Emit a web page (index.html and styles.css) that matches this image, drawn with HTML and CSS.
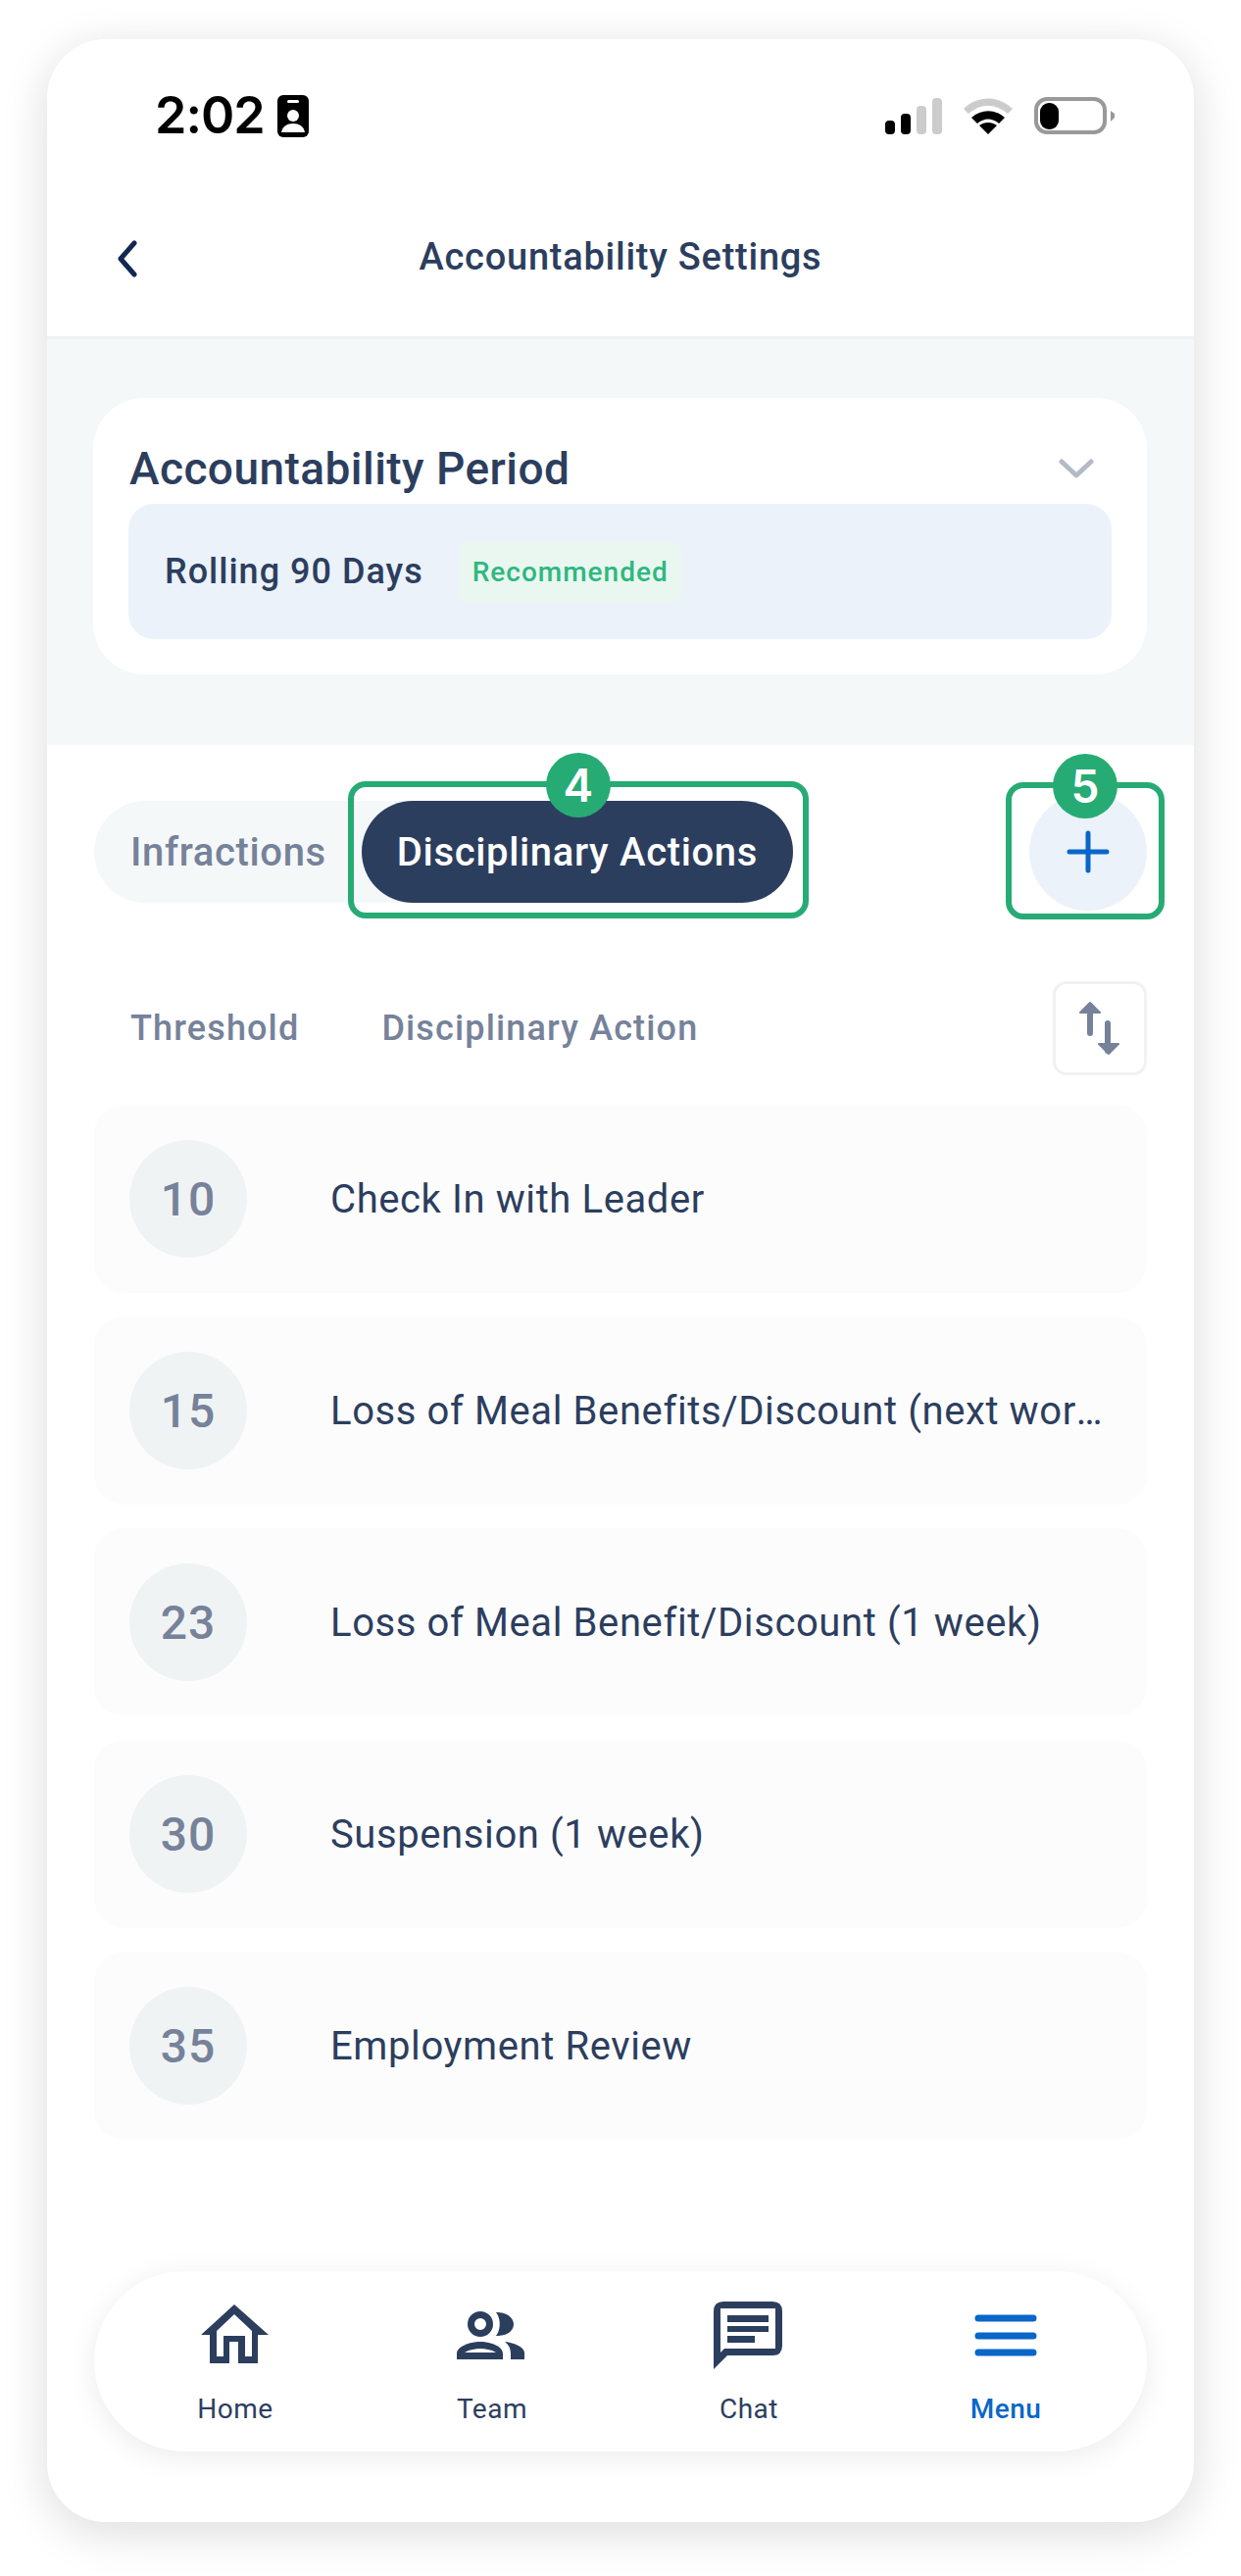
FILE: index.html
```html
<!DOCTYPE html>
<html lang="en">
<head>
    <meta charset="UTF-8">
    <meta name="viewport" content="width=device-width, initial-scale=1.0">
    <title>Accountability Settings</title>
    <link rel="stylesheet" href="styles.css">
</head>
<body>
    <div class="phone">
        <div class="status-bar">
            <div class="status-left">
                <span class="time">2:02</span>
                <svg class="id-icon" width="32" height="43" viewBox="0 0 32 43">
                    <rect width="32" height="43" rx="6" fill="#000"/>
                    <rect x="10" y="5" width="12" height="3" rx="1.5" fill="#fff"/>
                    <circle cx="16" cy="21" r="6" fill="#fff"/>
                    <path d="M4 38 C5 32 10 29 16 29 C22 29 27 32 28 38 Z" fill="#fff"/>
                </svg>
            </div>
            <div class="status-right">
                <svg width="58" height="37" viewBox="0 0 58 37">
                    <rect x="0" y="23" width="10" height="14" rx="4" fill="#000"/>
                    <rect x="16" y="16" width="10" height="21" rx="4" fill="#000"/>
                    <rect x="32" y="8" width="10" height="29" rx="4" fill="#ccc"/>
                    <rect x="48" y="0" width="10" height="37" rx="4" fill="#ccc"/>
                </svg>
                <svg width="50" height="37" viewBox="0 0 50 37">
                    <path d="M0 11 C14 -3 36 -3 50 11 L45 16 C32 5 18 5 5 16 Z" fill="#ccc"/>
                    <path d="M8 20 C18 11 32 11 42 20 L36 26 C29 20 21 20 14 26 Z" fill="#000"/>
                    <path d="M16 28 C21 24 29 24 34 28 L25 37 Z" fill="#000"/>
                </svg>
                <svg width="82" height="38" viewBox="0 0 82 38">
                    <rect x="2" y="2" width="70" height="34" rx="11" fill="none" stroke="#999" stroke-width="4"/>
                    <rect x="6" y="6" width="19" height="27" rx="9" fill="#000"/>
                    <path d="M78 14 L82 17 V21 L78 25 Z" fill="#999"/>
                </svg>
            </div>
        </div>

        <div class="top-nav">
            <svg class="back" width="24" height="38" viewBox="0 0 24 38">
                <path d="M19 3 L5 19 L19 35" fill="none" stroke="#14284f" stroke-width="5" stroke-linecap="round" stroke-linejoin="round"/>
            </svg>
            <span class="top-title">Accountability Settings</span>
        </div>

        <div class="period-band">
            <div class="period-card">
                <div class="period-head">
                    <span class="period-title">Accountability Period</span>
                    <svg width="36" height="20" viewBox="0 0 36 20">
                        <path d="M3 3 L18 17 L33 3" fill="none" stroke="#b4bbc7" stroke-width="5" stroke-linecap="round" stroke-linejoin="round"/>
                    </svg>
                </div>
                <div class="period-value">
                    <span class="period-name">Rolling 90 Days</span>
                    <span class="tag-green">Recommended</span>
                </div>
            </div>
        </div>

        <div class="tabs-row">
            <div class="tabs">
                <span class="tab">Infractions</span>
                <span class="tab tab-active">
                    Disciplinary Actions
                    <span class="mark mark-tab"><span class="mark-badge">4</span></span>
                </span>
            </div>
            <button class="add-button">
                <svg width="44" height="44" viewBox="0 0 44 44">
                    <path d="M22 3 V41 M3 22 H41" fill="none" stroke="#0a66c8" stroke-width="5" stroke-linecap="round"/>
                </svg>
                <span class="mark mark-add"><span class="mark-badge">5</span></span>
            </button>
        </div>

        <div class="table-head">
            <span class="col-threshold">Threshold</span>
            <span class="col-action">Disciplinary Action</span>
            <button class="sort-button">
                <svg width="42" height="54" viewBox="0 0 42 54">
                    <path d="M11 32 V4" fill="none" stroke="#76829a" stroke-width="6" stroke-linecap="round"/>
                    <path d="M1 11 L11 1 L21 11 Z" fill="#76829a" stroke="#76829a" stroke-width="2" stroke-linejoin="round"/>
                    <path d="M29 22 V50" fill="none" stroke="#76829a" stroke-width="6" stroke-linecap="round"/>
                    <path d="M20 43 L30 53 L40 43 Z" fill="#76829a" stroke="#76829a" stroke-width="2" stroke-linejoin="round"/>
                </svg>
            </button>
        </div>

        <ul class="action-list">
            <li class="action-row"><span class="points">10</span><span class="action-name">Check In with Leader</span></li>
            <li class="action-row"><span class="points">15</span><span class="action-name">Loss of Meal Benefits/Discount (next working day)</span></li>
            <li class="action-row"><span class="points">23</span><span class="action-name">Loss of Meal Benefit/Discount (1 week)</span></li>
            <li class="action-row"><span class="points">30</span><span class="action-name">Suspension (1 week)</span></li>
            <li class="action-row"><span class="points">35</span><span class="action-name">Employment Review</span></li>
        </ul>

        <nav class="bottom-nav">
            <a class="nav-item">
                <svg width="100" height="100" viewBox="0 0 100 100">
                    <path fill="#2c3e5e" fill-rule="evenodd" d="M15 46 L49 15 L84 46 H73 V75 H53 V53 H44 V75 H24 V46 Z M49 25 L31 42 V68 H38 V47 H60 V68 H67 V42 Z"/>
                </svg>
                <span>Home</span>
            </a>
            <a class="nav-item">
                <svg width="100" height="100" viewBox="0 0 100 100">
                    <path fill="#2c3e5e" fill-rule="evenodd" d="M38 22 A13 13 0 1 1 38 48 A13 13 0 1 1 38 22 Z M38 29 A6 6 0 1 0 38 41 A6 6 0 1 0 38 29 Z"/>
                    <path fill="#2c3e5e" fill-rule="evenodd" d="M14 71 V65 C14 58 27 53 38 53 C49 53 61 58 61 65 V71 Z M22 64 C27 61 33 60 38 60 C43 60 49 61 54 64 Z"/>
                    <path fill="#2c3e5e" d="M54 23 C67 23 72 30 72 35 C72 41 67 47 54 47 C59 41 59 29 54 23 Z"/>
                    <path fill="#2c3e5e" d="M63 53 C73 54 83 59 83 64 V71 H69 V65 C69 60 67 56 63 53 Z"/>
                </svg>
                <span>Team</span>
            </a>
            <a class="nav-item">
                <svg width="100" height="100" viewBox="0 0 100 100">
                    <path fill="#2c3e5e" fill-rule="evenodd" d="M14 22 Q14 12 24 12 H74 Q84 12 84 22 V57 Q84 67 74 67 H28 L14 81 Z M21 19 V64 L25 60 H77 V19 Z"/>
                    <path fill="#2c3e5e" d="M28 26 H70 V33 H28 Z M28 37 H70 V43 H28 Z M28 47 H56 V54 H28 Z"/>
                </svg>
                <span>Chat</span>
            </a>
            <a class="nav-item nav-item-active">
                <svg width="100" height="100" viewBox="0 0 100 100">
                    <path d="M22 29 H78 M22 47 H78 M22 64 H78" fill="none" stroke="#0a66c8" stroke-width="7" stroke-linecap="round"/>
                </svg>
                <span>Menu</span>
            </a>
        </nav>
    </div>
</body>
</html>
```

FILE: styles.css
```css
body {
    margin: 0;
    padding: 40px 48px 55px;
    background-color: #fff;
    font-family: Roboto, "Liberation Sans", sans-serif;
    color: #2c3e5e;
}
button {
    padding: 0;
    font: inherit;
    cursor: pointer;
}
.phone {
    height: 2533px;
    display: flex;
    flex-direction: column;
    background-color: #fff;
    border-radius: 60px;
    box-shadow: 0 10px 48px rgba(0,0,0,0.14);
}

/* status bar */
.status-bar {
    height: 156px;
    box-sizing: border-box;
    padding: 0 81px 0 110px;
    display: flex;
    justify-content: space-between;
    align-items: center;
}
.status-left {
    display: flex;
    align-items: center;
    gap: 13px;
}
.time {
    font-family: Inter, sans-serif;
    font-size: 52px;
    font-weight: 600;
    letter-spacing: -1px;
    color: #000;
    line-height: 1;
}
.status-right {
    display: flex;
    align-items: center;
    gap: 22px;
}

/* top nav */
.top-nav {
    position: relative;
    height: 150px;
    box-sizing: border-box;
    padding-bottom: 15px;
    display: flex;
    align-items: center;
    justify-content: center;
    border-bottom: 3px solid #eef1f3;
}
.back {
    position: absolute;
    left: 70px;
    top: 49px;
}
.top-title {
    font-size: 38px;
    font-weight: 500;
    letter-spacing: 0.75px;
}

/* period */
.period-band {
    padding: 60px 48px 72px 47px;
    background-color: #f5f8f9;
}
.period-card {
    padding: 36px;
    background-color: #fff;
    border-radius: 52px;
}
.period-head {
    height: 72px;
    padding: 0 18px 0 1px;
    display: flex;
    justify-content: space-between;
    align-items: center;
}
.period-title {
    font-size: 46px;
    font-weight: 500;
    letter-spacing: 0.45px;
}
.period-value {
    height: 138px;
    padding: 0 37px;
    display: flex;
    align-items: center;
    gap: 36px;
    background-color: #ebf2fa;
    border-radius: 26px;
}
.period-name {
    font-size: 36px;
    font-weight: 500;
    letter-spacing: 1px;
}
.tag-green {
    padding: 14px 14px;
    font-size: 28px;
    font-weight: 500;
    letter-spacing: 1px;
    color: #2fb880;
    background-color: #e9f7f0;
    border-radius: 10px;
}

/* tabs */
.tabs-row {
    padding: 49px 48px 0;
    display: flex;
    justify-content: space-between;
    align-items: center;
}
.tabs {
    display: flex;
    align-items: center;
    gap: 36px;
    padding-left: 37px;
    background-color: #f5f8f9;
    border-radius: 52px;
}
.tab {
    font-size: 40px;
    font-weight: 500;
    letter-spacing: 0.65px;
    color: #76829a;
}
.tab-active {
    position: relative;
    height: 104px;
    padding: 0 36px;
    display: flex;
    align-items: center;
    color: #fff;
    background-color: #2c3e5e;
    border-radius: 52px;
}
.add-button {
    position: relative;
    width: 120px;
    height: 120px;
    display: flex;
    align-items: center;
    justify-content: center;
    border: none;
    border-radius: 50%;
    background-color: #ebf2fa;
}
.mark {
    position: absolute;
    border: 6px solid #27ab74;
    border-radius: 18px;
}
.mark-tab {
    inset: -20px -16px -16px -14px;
}
.mark-add {
    inset: -11px -18px -9px -24px;
}
.mark-badge {
    position: absolute;
    top: -35px;
    left: 50%;
    width: 66px;
    height: 66px;
    margin-left: -33px;
    display: flex;
    align-items: center;
    justify-content: center;
    border-radius: 50%;
    background-color: #27ab74;
    color: #fff;
    font-family: Inter, sans-serif;
    font-size: 46px;
    font-weight: 600;
    letter-spacing: 0;
}

/* table */
.table-head {
    margin-top: 72px;
    padding: 0 48px 0 85px;
    display: flex;
    align-items: center;
    font-size: 36px;
    font-weight: 500;
    letter-spacing: 1.15px;
    color: #76829a;
}
.col-action {
    margin-left: 84px;
}
.sort-button {
    width: 96px;
    height: 96px;
    margin-left: auto;
    display: flex;
    align-items: center;
    justify-content: center;
    background-color: #fff;
    border: 3px solid #eff1f3;
    border-radius: 14px;
}
.action-list {
    list-style-type: none;
    margin: 30px 48px 0 48px;
    padding: 0;
    display: flex;
    flex-direction: column;
    gap: 24px;
}
.action-row {
    height: 192px;
    padding: 0 36px;
    display: flex;
    align-items: center;
    gap: 85px;
    background-color: #fcfcfd;
    border-radius: 30px;
}
.points {
    flex: none;
    width: 120px;
    height: 120px;
    display: flex;
    align-items: center;
    justify-content: center;
    border-radius: 50%;
    background-color: #f0f3f4;
    color: #76829a;
    font-size: 48px;
    font-weight: 500;
    letter-spacing: 1px;
}
.action-name {
    font-size: 40px;
    letter-spacing: 0.6px;
    white-space: nowrap;
    overflow: hidden;
    text-overflow: ellipsis;
}

/* bottom nav */
.bottom-nav {
    margin: auto 48px 72px;
    height: 184px;
    padding: 0 13px;
    display: grid;
    grid-template-columns: repeat(4, 1fr);
    background-color: #fff;
    border-radius: 92px;
    box-shadow: 0 6px 30px rgba(0,0,0,0.08);
}
.nav-item {
    display: flex;
    flex-direction: column;
    align-items: center;
    justify-content: flex-start;
    font-size: 28px;
    letter-spacing: 0.5px;
}
.nav-item svg {
    margin-top: 19px;
    margin-bottom: 5px;
}
.nav-item-active {
    color: #0a66c8;
    font-weight: 500;
}
```
